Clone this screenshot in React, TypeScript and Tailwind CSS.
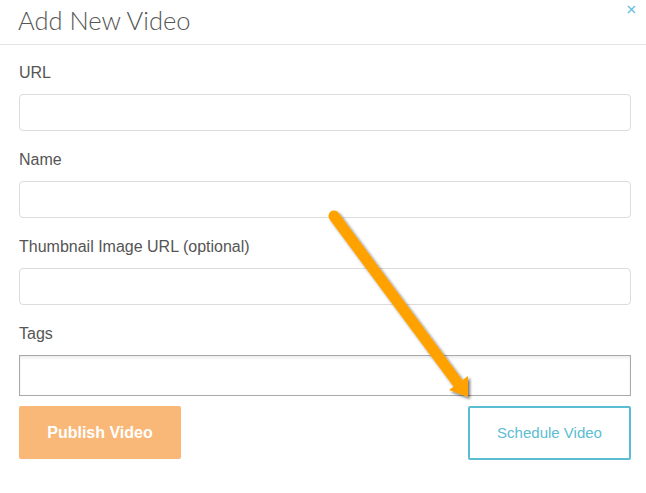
import { FC } from "react";

const fields = ["URL", "Name", "Thumbnail Image URL (optional)"];

const Field: FC<{ label: string }> = ({ label }) => (
  <div className="flex flex-col mb-[19px]">
    <label className="text-[16px] leading-[20px] text-[#555] mb-[11px]">{label}</label>
    <input
      type="text"
      className="h-[37px] w-full rounded-[4px] border border-[#dcdcdc] bg-white outline-none"
    />
  </div>
);

const Arrow: FC = () => (
  <svg className="absolute left-0 top-0 pointer-events-none" width="646" height="493">
    <defs>
      <filter id="arrowShadow" x="-20%" y="-20%" width="140%" height="140%">
        <feDropShadow dx="2" dy="2" stdDeviation="1.6" floodColor="#000" floodOpacity="0.55" />
      </filter>
    </defs>
    <g filter="url(#arrowShadow)">
      <line x1="334" y1="216" x2="457" y2="382" stroke="#ffa200" strokeWidth="11" strokeLinecap="round" />
      <polygon points="449,390 468,376 468,397" fill="#ffa200" />
    </g>
  </svg>
);

export default function App() {
  return (
    <div
      className="relative w-[646px] h-[493px] bg-white overflow-hidden"
      style={{ fontFamily: '"Liberation Sans", Arial, sans-serif' }}
    >
      <div className="flex justify-between h-[45px] border-b border-[#e3e3e3] pl-[18px] pr-[9px]">
        <h1
          className="text-[25.5px] leading-[40px] font-light text-[#555]"
          style={{ fontFamily: 'Lato, Roboto, "Liberation Sans", sans-serif' }}
        >
          Add New Video
        </h1>
        <button className="mt-[4px] h-[10px] w-[10px] text-[#5bc0de]">
          <svg width="9" height="9" viewBox="0 0 9 9">
            <path d="M1 1 L8 8 M8 1 L1 8" stroke="currentColor" strokeWidth="1.3" />
          </svg>
        </button>
      </div>

      <div className="pl-[19px] pr-[15px] pt-[18px]">
        {fields.map((f) => (
          <Field key={f} label={f} />
        ))}

        <div className="flex flex-col">
          <label className="text-[16px] leading-[20px] text-[#555] mb-[11px]">Tags</label>
          <input
            type="text"
            className="h-[41px] w-full border border-[#a9a9a9] bg-white outline-none shadow-[inset_0_2px_3px_rgba(0,0,0,0.08)]"
          />
        </div>

        <div className="flex justify-between mt-[10px]">
          <button className="h-[53px] w-[162px] rounded-[2px] bg-[#f9b778] text-white font-bold text-[16px]">
            Publish Video
          </button>
          <button className="h-[54px] w-[163px] rounded-[2px] border-2 border-[#5bbdd1] text-[#5bbdd1] text-[15px]">
            Schedule Video
          </button>
        </div>
      </div>

      <Arrow />
    </div>
  );
}
